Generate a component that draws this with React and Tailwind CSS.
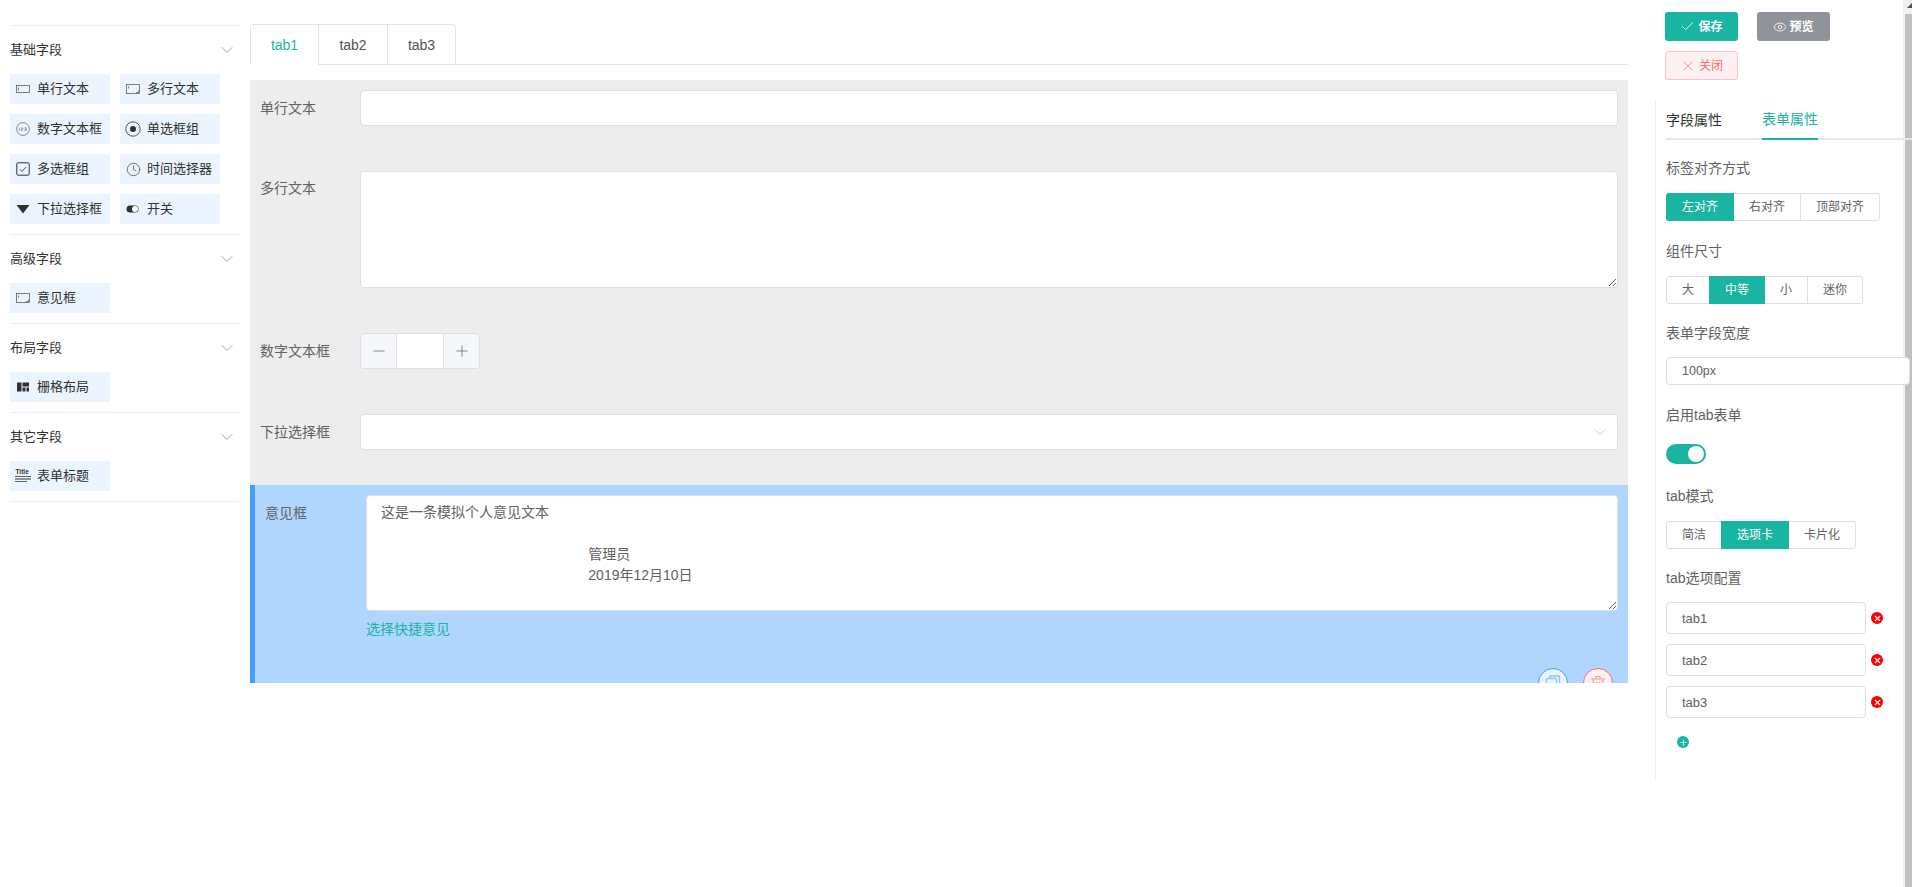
import React from "react";
import { Check, Eye, X, ChevronDown, Minus, Plus, Clock } from "lucide-react";

const teal = "bg-[#19b5a2]";

const InputIcon = () => (
  <svg width="14" height="14" viewBox="0 0 14 14" fill="none" stroke="#606266" strokeWidth="0.8">
    <rect x="0.5" y="3.5" width="13" height="7" />
    <path d="M2.5 5.5v3" />
  </svg>
);

const TextareaIcon = () => (
  <svg width="14" height="14" viewBox="0 0 14 14" fill="none" stroke="#606266" strokeWidth="0.8">
    <rect x="0.5" y="2.5" width="13" height="9" />
    <path d="M2.5 4.5v2M10 10.5h2.5V8.5" />
  </svg>
);

const NumberIcon = () => (
  <svg width="14" height="14" viewBox="0 0 14 14" fill="none" stroke="#606266" strokeWidth="0.7">
    <circle cx="7" cy="7" r="6.4" />
    <path d="M3.4 5.5v3M5.4 6h1.4v1H5.4v1.5h1.4M8.6 5.8h1.6v2.7H8.6M8.8 7.1h1.2" strokeWidth="0.6" />
  </svg>
);

const RadioIcon = () => (
  <svg width="16" height="16" viewBox="0 0 16 16" fill="none">
    <circle cx="8" cy="8" r="7.2" stroke="#303133" strokeWidth="0.8" />
    <circle cx="8" cy="8" r="3" fill="#303133" />
  </svg>
);

const CheckboxIcon = () => (
  <svg width="14" height="14" viewBox="0 0 14 14" fill="none" stroke="#303133">
    <rect x="0.8" y="0.8" width="12.4" height="12.4" rx="1.4" strokeWidth="1" />
    <path d="M3.8 7.2l2.2 2.2 4.2-4.4" strokeWidth="0.8" />
  </svg>
);

const SelectIcon = () => (
  <svg width="14" height="14" viewBox="0 0 14 14">
    <path d="M0.5 3h13L7 11.5z" fill="#303133" />
  </svg>
);

const SwitchIcon = () => (
  <svg width="14" height="14" viewBox="0 0 14 14" fill="none">
    <rect x="0.5" y="3.5" width="12" height="7" rx="3.5" fill="#303133" />
    <circle cx="9" cy="7" r="3" fill="#fff" />
  </svg>
);

const GridIcon = () => (
  <svg width="14" height="14" viewBox="0 0 14 14" fill="#303133">
    <path d="M1 2.5h4.5v9H1zM6.5 2.5H13v4H6.5zM6.5 7.5h3v4h-3zM10.5 7.5H13v4h-2.5z" />
  </svg>
);

const TitleIcon = () => (
  <svg width="16" height="16" viewBox="0 0 16 16" fill="#303133">
    <text x="0.5" y="6" fontSize="6.5" fontWeight="700" fontFamily="Liberation Sans">Title</text>
    <path d="M0 8h16v.8H0zM0 10.6h16v.8H0zM0 13.2h12v.8H0z" />
  </svg>
);

const fieldGroups = [
  {
    title: "基础字段",
    items: [
      ["单行文本", <InputIcon />],
      ["多行文本", <TextareaIcon />],
      ["数字文本框", <NumberIcon />],
      ["单选框组", <RadioIcon />],
      ["多选框组", <CheckboxIcon />],
      ["时间选择器", <Clock size={15} strokeWidth={1} color="#303133" />],
      ["下拉选择框", <SelectIcon />],
      ["开关", <SwitchIcon />],
    ],
  },
  { title: "高级字段", items: [["意见框", <TextareaIcon />]] },
  { title: "布局字段", items: [["栅格布局", <GridIcon />]] },
  { title: "其它字段", items: [["表单标题", <TitleIcon />]] },
];

const FieldGroup = ({ group }) => (
  <div className="border-b border-[#ebeef5]">
    <div className="flex h-[48px] items-center justify-between pr-[3px] text-[13px] text-[#303133]">
      {group.title}
      <ChevronDown size={20} strokeWidth={1} color="#909399" />
    </div>
    <div className="flex flex-wrap gap-x-[10px] gap-y-[10px] pb-[10px]">
      {group.items.map(([label, icon]) => (
        <div key={label} className="flex h-[30px] w-[100px] items-center bg-[#ecf5ff] text-[13px] text-[#303133]">
          <div className="ml-[5px] flex w-[16px] justify-center">{icon}</div>
          <span className="ml-[6px] whitespace-nowrap">{label}</span>
        </div>
      ))}
    </div>
  </div>
);

const ButtonGroup = ({ items, active, className }) => (
  <div className={`flex h-[28px] w-fit rounded-[3px] border border-[#dcdfe6] text-[12px] text-[#606266] ${className}`}>
    {items.map(([label, width], i) => (
      <div
        key={label}
        style={{ width }}
        className={`flex shrink-0 items-center justify-center ${
          i === active ? "-my-px bg-[#19b5a2] text-white" : ""
        } ${i > 0 && i !== active && i - 1 !== active ? "border-l border-[#dcdfe6]" : ""} ${
          i === 0 && i === active ? "-ml-px rounded-l-[3px]" : ""
        }`}
      >
        {label}
      </div>
    ))}
  </div>
);

const PropLabel = ({ children, className = "" }) => (
  <div className={`text-[14px] leading-[20px] text-[#606266] ${className}`}>{children}</div>
);

const TabOption = ({ name }) => (
  <div className="flex items-center">
    <div className="flex h-[32px] w-[200px] items-center rounded-[4px] border border-[#dcdfe6] pl-[15px] pt-px text-[13px] text-[#606266]">
      {name}
    </div>
    <div className="ml-[5px] flex h-[12px] w-[12px] items-center justify-center rounded-full bg-[#f70000]">
      <X size={9} strokeWidth={3} color="#fff" />
    </div>
  </div>
);

const FormRow = ({ label, className, labelClass = "w-[100px] leading-[36px]", children }) => (
  <div className={`flex ${className}`}>
    <div className={`shrink-0 whitespace-nowrap text-[14px] text-[#606266] ${labelClass}`}>{label}</div>
    <div className="flex-1">{children}</div>
  </div>
);

const inputBox = "rounded-[4px] border border-[#dcdfe6] bg-white";
const indent = " ".repeat(53) + "\u200a";
const opinionText = `这是一条模拟个人意见文本\n\n${indent}管理员\n${indent}2019年12月10日`;

const App = () => {
  return (
    <div
      className="relative flex h-[887px] w-[1912px] overflow-hidden bg-white"
      style={{ fontFamily: '"Liberation Sans", "Noto Sans CJK SC", sans-serif' }}
    >
      {/* page scrollbar sits behind the right panel */}
      <div className="absolute right-0 top-0 h-full w-[9px] bg-[#f1f1f1] pl-[2px]">
        <div className="flex h-[14px] items-start justify-end pt-[3px]">
          <svg width="5" height="5" viewBox="0 0 5 5">
            <path d="M5 0v5H0z" fill="#505050" />
          </svg>
        </div>
        <div className="h-[873px] bg-[#c1c1c1]" />
      </div>

      {/* left field list */}
      <div className="w-[250px] shrink-0 px-[10px] pt-[25px]">
        <div className="border-t border-[#ebeef5]">
          {fieldGroups.map((group) => (
            <FieldGroup key={group.title} group={group} />
          ))}
        </div>
      </div>

      {/* middle form */}
      <div className="w-[1378px] shrink-0 pt-[24px]">
        <div className="flex h-[41px] border-b border-[#dfe4ed] text-[14px] text-[#505256]">
          <div className="flex h-[41px] rounded-t-[4px] border border-[#dfe4ed] border-b-0">
            <div className="-mb-px flex h-[41px] w-[67px] items-center justify-center bg-white text-[#19b5a2]">tab1</div>
            <div className="flex h-[40px] w-[69px] items-center justify-center border-l border-[#dfe4ed]">tab2</div>
            <div className="flex h-[40px] w-[68px] items-center justify-center border-l border-[#dfe4ed]">tab3</div>
          </div>
        </div>

        <div className="mt-[15px] bg-[#ededed]">
          <div className="h-[405px] px-[10px] pt-[10px]">
            <FormRow label="单行文本" className="h-[81px]">
              <div className={`h-[36px] ${inputBox}`} />
            </FormRow>
            <FormRow label="多行文本" labelClass="w-[100px] -mt-px leading-[36px]" className="h-[162px]">
              <textarea readOnly rows={1} className={`block h-[117px] w-full outline-none ${inputBox}`} />
            </FormRow>
            <FormRow label="数字文本框" className="h-[81px]">
              <div className="flex h-[36px] w-[120px] overflow-hidden rounded-[4px] border border-[#dcdfe6] bg-white">
                <div className="flex w-[36px] items-center justify-center border-r border-[#dcdfe6] bg-[#f5f7fa]">
                  <Minus size={18} strokeWidth={1} color="#606266" />
                </div>
                <div className="flex-1" />
                <div className="flex w-[36px] items-center justify-center border-l border-[#dcdfe6] bg-[#f5f7fa]">
                  <Plus size={18} strokeWidth={1} color="#606266" />
                </div>
              </div>
            </FormRow>
            <FormRow label="下拉选择框">
              <div className={`flex h-[36px] items-center justify-end pr-[7px] ${inputBox}`}>
                <ChevronDown size={20} strokeWidth={1} color="#c0c4cc" />
              </div>
            </FormRow>
          </div>

          <div className="relative h-[198px] overflow-hidden border-l-[5px] border-[#409eff] bg-[#b0d6fe] pl-[10px] pr-[10px] pt-[10px]">
            <FormRow label="意见框" labelClass="w-[101px] leading-[36px]">
              <textarea
                readOnly
                defaultValue={opinionText}
                className={`block h-[116px] w-full py-[6px] pl-[14px] pr-[15px] text-[14px] leading-[21px] text-[#606266] outline-none ${inputBox}`}
              />
              <div className="mt-[8px] text-[14px] leading-[21px] text-[#19b5a2]">选择快捷意见</div>
            </FormRow>
            <div className="absolute right-[15px] top-[183px] flex gap-[15px]">
              <div className="flex h-[30px] w-[30px] justify-center rounded-full border border-[#409eff] bg-[#ecf5ff] pt-[6px]">
                <svg width="16" height="16" viewBox="0 0 16 16" fill="none" stroke="#8cc5ff" strokeWidth="1.4">
                  <rect x="4.5" y="1" width="10" height="12" rx="1" />
                  <rect x="1.5" y="3.5" width="10" height="12" rx="1" fill="#ecf5ff" />
                </svg>
              </div>
              <div className="flex h-[30px] w-[30px] justify-center rounded-full border border-[#f56c6c] bg-[#fef0f0] pt-[6px]">
                <svg width="16" height="16" viewBox="0 0 16 16" fill="none" stroke="#f89898" strokeWidth="1.2">
                  <path d="M1 4h14M5.5 4l.8-2.5h3.4L10.5 4M3 4l1 11h8l1-11M6.5 7v6M9.5 7v6" />
                </svg>
              </div>
            </div>
          </div>
        </div>
      </div>

      {/* right properties */}
      <div className="relative w-[284px] shrink-0 pl-[27px]">
        <div className="mt-[12px] flex w-[190px] flex-wrap gap-x-[19px] gap-y-[10px] pl-[10px] text-[12px] font-bold">
          <div className={`flex h-[29px] w-[73px] items-center justify-center gap-[3px] rounded-[3px] text-white ${teal}`}>
            <Check size={15} strokeWidth={1.4} />
            保存
          </div>
          <div className="flex h-[29px] w-[73px] items-center justify-center gap-[2px] rounded-[3px] bg-[#909399] text-white">
            <Eye size={14} strokeWidth={1.4} />
            预览
          </div>
          <div className="flex h-[29px] w-[73px] items-center justify-center gap-[3px] rounded-[3px] border border-[#fbc4c4] bg-[#fef0f0] font-normal text-[#f56c6c]">
            <X size={16} strokeWidth={1} />
            关闭
          </div>
        </div>

        <div className="mt-[20px] h-[681px] border-l border-[#ebeef5] pl-[10px]">
          <div className="flex h-[40px] border-b-2 border-[#e4e7ed] text-[14px] text-[#303133]">
            <div className="flex h-[40px] w-[96px] items-center">字段属性</div>
            <div className="flex h-[40px] w-[56px] items-center border-b-2 border-[#19b5a2] text-[#19b5a2]">表单属性</div>
          </div>

          <PropLabel className="mt-[18px]">标签对齐方式</PropLabel>
          <ButtonGroup className="mt-[15px]" active={0} items={[["左对齐", 68], ["右对齐", 66], ["顶部对齐", 79]]} />

          <PropLabel className="mt-[20px]">组件尺寸</PropLabel>
          <ButtonGroup className="mt-[15px]" active={1} items={[["大", 42], ["中等", 56], ["小", 42], ["迷你", 55]]} />

          <PropLabel className="mt-[19px]">表单字段宽度</PropLabel>
          <div className="mt-[14px] flex h-[28px] w-[244px] items-center rounded-[4px] border border-[#dcdfe6] bg-white pl-[15px] text-[12.5px] text-[#606266]">
            100px
          </div>

          <PropLabel className="mt-[20px]">启用tab表单</PropLabel>
          <div className="relative mt-[19px] h-[20px] w-[40px] rounded-full bg-[#19b5a2]">
            <div className="absolute right-[2px] top-[2px] h-[16px] w-[16px] rounded-full bg-white" />
          </div>

          <PropLabel className="mt-[22px]">tab模式</PropLabel>
          <ButtonGroup className="mt-[15px]" active={1} items={[["简洁", 54], ["选项卡", 68], ["卡片化", 66]]} />

          <PropLabel className="mt-[19px]">tab选项配置</PropLabel>
          <div className="mt-[14px] flex flex-col gap-[10px]">
            <TabOption name="tab1" />
            <TabOption name="tab2" />
            <TabOption name="tab3" />
          </div>
          <div className="ml-[11px] mt-[18px] flex h-[12px] w-[12px] items-center justify-center rounded-full bg-[#19b5a2]">
            <Plus size={9} strokeWidth={2} color="#fff" />
          </div>
        </div>
      </div>
    </div>
  );
};

export default App;
